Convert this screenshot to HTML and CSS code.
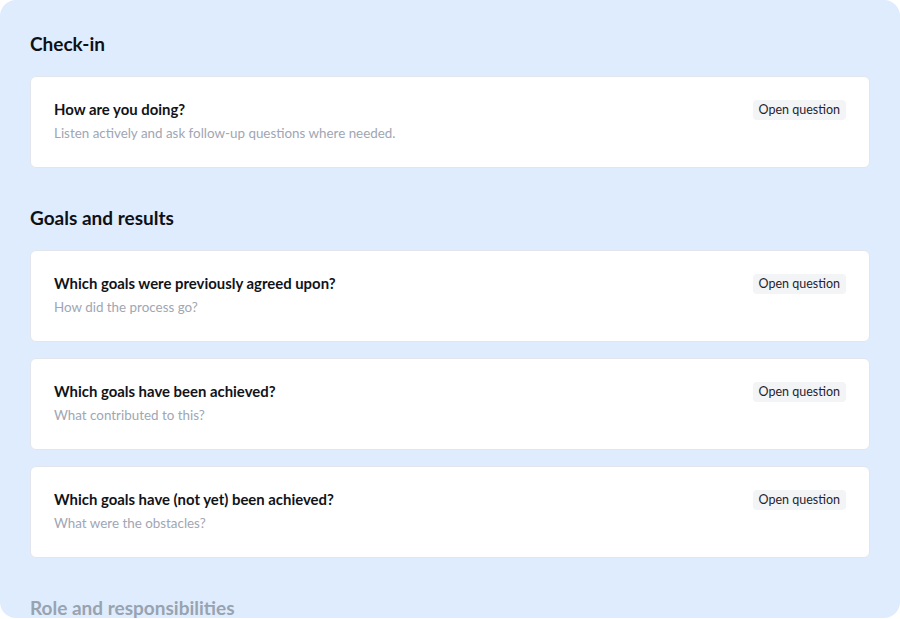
FILE: index.html
```html
<!DOCTYPE html>
<html>
<head>
<meta charset="utf-8">
<link rel="stylesheet" href="styles.css">
</head>
<body>
<div class="panel">
  <section class="section">
    <h2 class="heading">Check-in</h2>
    <div class="cards">
      <div class="card">
        <div class="text">
          <div class="title">How are you doing?</div>
          <div class="sub">Listen actively and ask follow-up questions where needed.</div>
        </div>
        <span class="badge">Open question</span>
      </div>
    </div>
  </section>
  <section class="section">
    <h2 class="heading">Goals and results</h2>
    <div class="cards">
      <div class="card">
        <div class="text">
          <div class="title">Which goals were previously agreed upon?</div>
          <div class="sub">How did the process go?</div>
        </div>
        <span class="badge">Open question</span>
      </div>
      <div class="card">
        <div class="text">
          <div class="title">Which goals have been achieved?</div>
          <div class="sub">What contributed to this?</div>
        </div>
        <span class="badge">Open question</span>
      </div>
      <div class="card">
        <div class="text">
          <div class="title">Which goals have (not yet) been achieved?</div>
          <div class="sub">What were the obstacles?</div>
        </div>
        <span class="badge">Open question</span>
      </div>
    </div>
  </section>
  <section class="section">
    <h2 class="heading faded">Role and responsibilities</h2>
  </section>
</div>
</body>
</html>
```
FILE: styles.css
```css
html, body {
  margin: 0;
  padding: 0;
  background: #ffffff;
}
body {
  font-family: Lato, "Noto Sans", sans-serif;
  color: #111318;
}
.panel {
  box-sizing: border-box;
  width: 900px;
  height: 618px;
  background: #dfecfd;
  border-radius: 16px;
  padding: 30px 30px 0 30px;
  overflow: hidden;
  display: flex;
  flex-direction: column;
  gap: 36px;
}
.section {
  display: flex;
  flex-direction: column;
  gap: 18px;
}
.heading {
  margin: 0;
  font-size: 19px;
  line-height: 28px;
  font-weight: 700;
  color: #0d1117;
}
.heading.faded {
  color: #98a3b0;
}
.cards {
  display: flex;
  flex-direction: column;
  gap: 16px;
}
.card {
  box-sizing: border-box;
  height: 92px;
  background: #ffffff;
  border: 1px solid #e2e6ec;
  border-radius: 6px;
  padding: 22px 23px 0 23px;
  display: flex;
  justify-content: space-between;
  align-items: flex-start;
}
.text {
  display: flex;
  flex-direction: column;
  gap: 4px;
}
.title {
  font-size: 14.9px;
  line-height: 20px;
  font-weight: 700;
  color: #111318;
}
.sub {
  font-size: 13.4px;
  line-height: 20px;
  color: #a0a6b3;
}
.badge {
  margin-top: 1px;
  font-size: 12.5px;
  line-height: 20px;
  padding: 0 6px;
  background: #f3f4f6;
  border-radius: 4px;
  color: #1f2430;
}
```
